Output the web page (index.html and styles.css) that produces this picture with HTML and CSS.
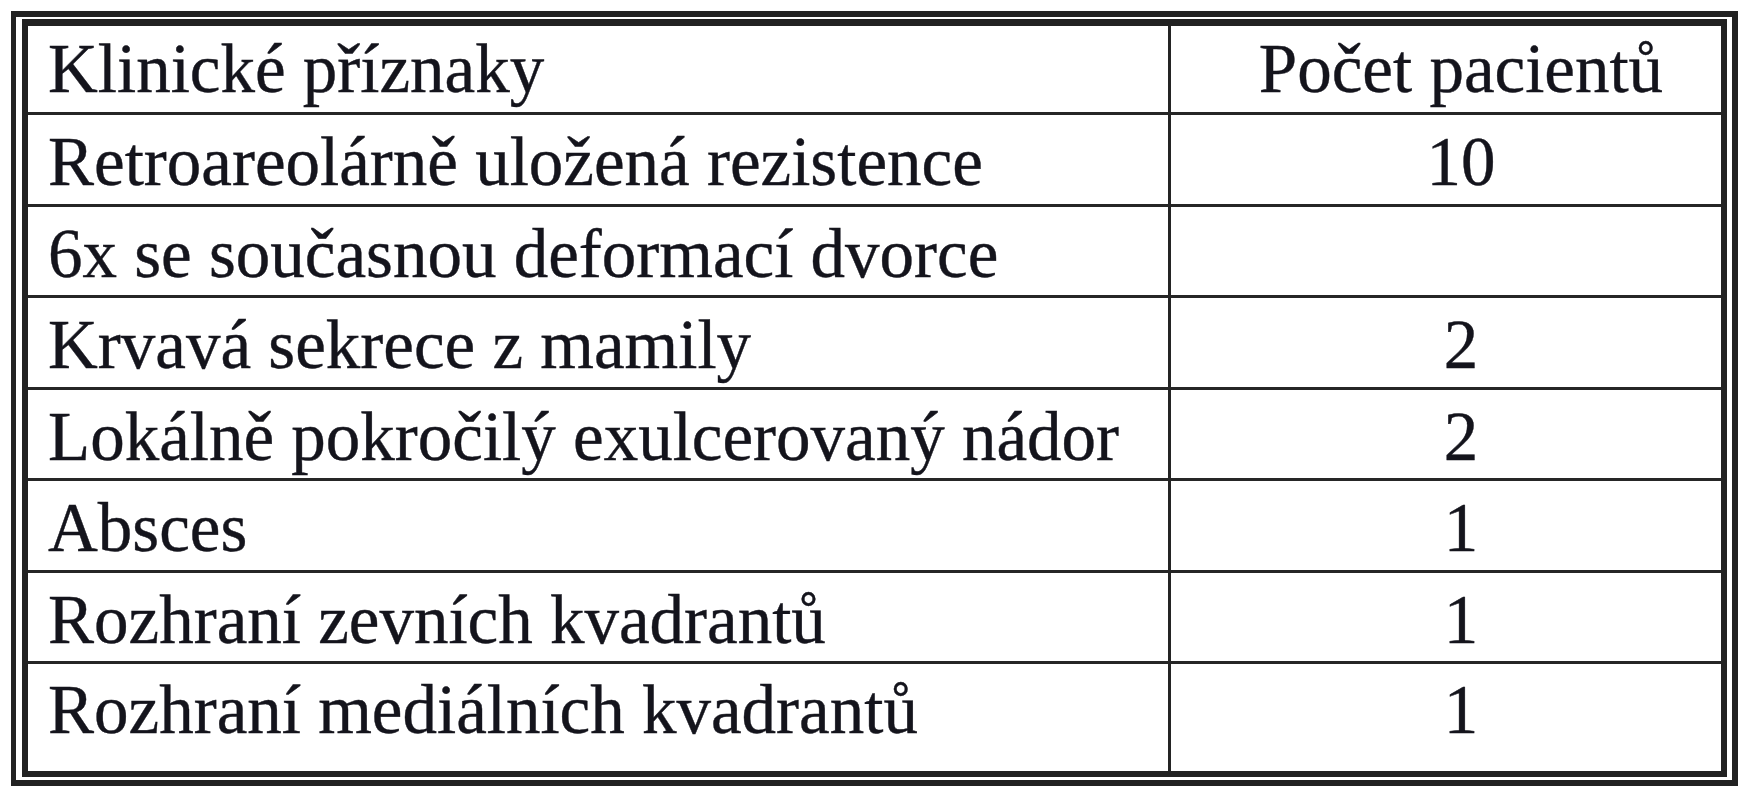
FILE: index.html
```html
<!DOCTYPE html>
<html lang="cs">
<head>
<meta charset="utf-8">
<title>Klinické příznaky</title>
<link rel="stylesheet" href="styles.css">
</head>
<body>
<div class="frame">
  <div class="tbl">
    <div class="cell label head">Klinické příznaky</div>
    <div class="cell num head">Počet pacientů</div>

    <div class="cell label r2">Retroareolárně uložená rezistence</div>
    <div class="cell num r2">10</div>

    <div class="cell label r3">6x se současnou deformací dvorce</div>
    <div class="cell num r3"></div>

    <div class="cell label r2">Krvavá sekrece z mamily</div>
    <div class="cell num r2">2</div>

    <div class="cell label r3">Lokálně pokročilý exulcerovaný nádor</div>
    <div class="cell num r3">2</div>

    <div class="cell label r2">Absces</div>
    <div class="cell num r2">1</div>

    <div class="cell label r3">Rozhraní zevních kvadrantů</div>
    <div class="cell num r3">1</div>

    <div class="cell label last">Rozhraní mediálních kvadrantů</div>
    <div class="cell num last">1</div>
  </div>
</div>
</body>
</html>
```

FILE: styles.css
```css
html, body {
  margin: 0;
  padding: 0;
  background: #ffffff;
}

body {
  padding: 11px 0 0 11px;
}

.frame {
  width: 1727px;
  box-sizing: border-box;
  border-style: solid;
  border-color: #222222;
  border-width: 6px 6px 6px 5px;
  padding: 2px 5px 3px 6px;
}

.tbl {
  display: grid;
  grid-template-columns: 1143px 550px;
  grid-template-rows: 86px 92px 91px 92px 91px 92px 91px 110px;
  border-style: solid;
  border-color: #222222;
  border-width: 7px 6px 6px 6px;
}

.cell {
  box-sizing: border-box;
  font-family: "Liberation Serif", "Times New Roman", serif;
  font-size: 69px;
  line-height: 1;
  color: #14141c;
  -webkit-text-stroke: 0.4px #14141c;
  white-space: nowrap;
  padding-top: 13px;
}

.label {
  padding-left: 20px;
  border-right: 3px solid #242424;
}

.num {
  text-align: center;
  padding-left: 30px;
}

.head {
  padding-top: 9px;
}

.r2, .r3, .last {
  border-top: 3px solid #262626;
}

.last {
  padding-top: 12px;
}
```
